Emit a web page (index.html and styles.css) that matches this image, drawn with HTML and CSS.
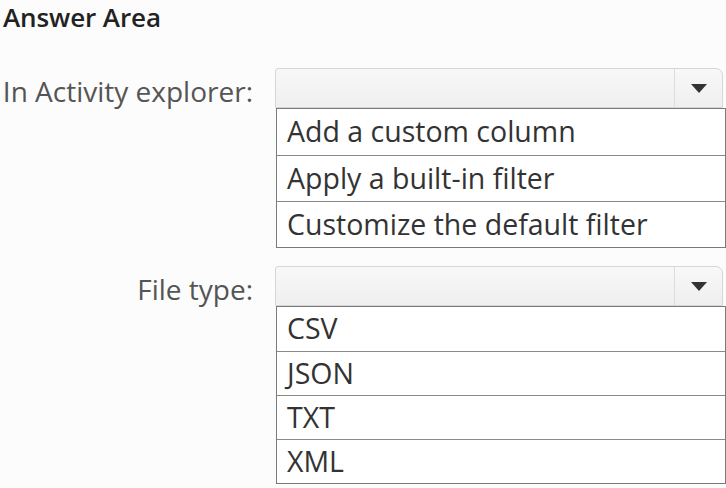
FILE: index.html
```html
<!DOCTYPE html>
<html lang="en">
  <head>
    <meta charset="UTF-8" />
    <meta name="viewport" content="width=device-width, initial-scale=1.0" />
    <title>Answer Area</title>
    <link rel="stylesheet" href="styles.css">
  </head>
  <body>
    <main class="answer-area">
      <h1 class="title">Answer Area</h1>

      <div class="question">
        <div class="question-label">In Activity explorer:</div>
        <div class="picker">
          <div class="select">
            <span class="select-value"></span>
            <span class="select-arrow">
              <svg width="18" height="11" viewBox="0 0 18 11"><path d="M1 1 L17 1 L9 10 Z" fill="#333"/></svg>
            </span>
          </div>
          <ul class="options">
            <li>Add a custom column</li>
            <li>Apply a built-in filter</li>
            <li>Customize the default filter</li>
          </ul>
        </div>
      </div>

      <div class="question">
        <div class="question-label">File type:</div>
        <div class="picker">
          <div class="select">
            <span class="select-value"></span>
            <span class="select-arrow">
              <svg width="18" height="11" viewBox="0 0 18 11"><path d="M1 1 L17 1 L9 10 Z" fill="#333"/></svg>
            </span>
          </div>
          <ul class="options options-short">
            <li>CSV</li>
            <li>JSON</li>
            <li>TXT</li>
            <li>XML</li>
          </ul>
        </div>
      </div>
    </main>
  </body>
</html>
```

FILE: styles.css
```css
* {
  margin: 0;
  padding: 0;
  box-sizing: border-box;
}

body {
  font-family: "Open Sans", "Noto Sans", sans-serif;
  background-color: #fcfcfc;
  color: #333;
}

.answer-area {
  display: flex;
  flex-direction: column;
  gap: 18px;
}

.title {
  font-size: 26px;
  font-weight: 600;
  color: #222;
  line-height: 34px;
  padding-left: 3px;
  margin-bottom: 16px;
  letter-spacing: -0.1px;
}

.question {
  display: grid;
  grid-template-columns: 275px 1fr;
}

.question-label {
  text-align: right;
  padding-right: 22px;
  padding-top: 3px;
  height: 40px;
  line-height: 40px;
  font-size: 28px;
  color: #555;
}

.select {
  display: flex;
  height: 40px;
  width: 448px;
  border: 1px solid #d6d6d6;
  border-radius: 3px 7px 0 0;
  background: linear-gradient(#f8f8f8, #efefef);
}

.select-value {
  flex: 1;
}

.select-arrow {
  width: 48px;
  border-left: 1px solid #dcdcdc;
  display: flex;
  align-items: center;
  justify-content: center;
}

.options {
  list-style: none;
  width: 450px;
  margin-left: 1px;
  border: 1px solid #7a7a7a;
  background-color: #fff;
}

.options li {
  height: 46px;
  line-height: 44px;
  padding-left: 10px;
  font-size: 28.5px;
  color: #333;
  border-top: 1px solid #8a8a8a;
}

.options li:first-child {
  border-top: none;
}

.options-short li {
  height: 44px;
  line-height: 42px;
}
```
